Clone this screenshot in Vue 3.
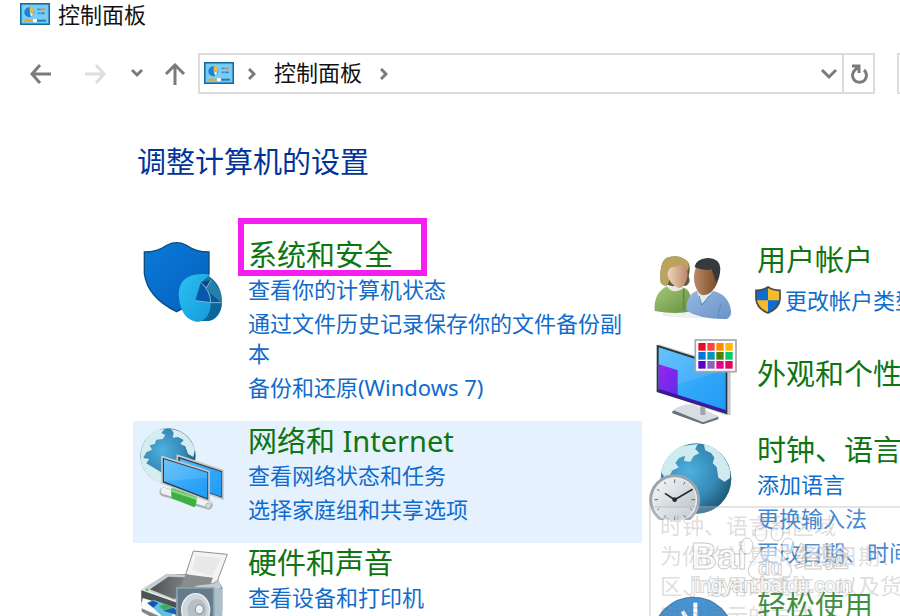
<template>
  <div class="window">
    <svg class="defs" aria-hidden="true">
      <defs>
        <linearGradient id="shieldBlue" x1="0" y1="0" x2="1" y2="1">
          <stop offset="0" stop-color="#0a7ad8" />
          <stop offset="1" stop-color="#0560bd" />
        </linearGradient>
        <linearGradient id="pieCyan" x1="0" y1="0" x2="1" y2="1">
          <stop offset="0" stop-color="#2cc0f2" />
          <stop offset="1" stop-color="#159bd8" />
        </linearGradient>
        <radialGradient id="globe" cx="0.4" cy="0.4" r="0.65">
          <stop offset="0" stop-color="#4fb0e0" />
          <stop offset="0.6" stop-color="#3589b5" />
          <stop offset="1" stop-color="#1d5876" />
        </radialGradient>
        <linearGradient id="screen" x1="0" y1="0" x2="1" y2="1">
          <stop offset="0" stop-color="#55bbfb" />
          <stop offset="0.5" stop-color="#35a9fa" />
          <stop offset="1" stop-color="#1e9af5" />
        </linearGradient>
        <linearGradient id="purple" x1="0" y1="0" x2="1" y2="1">
          <stop offset="0" stop-color="#9a22f5" />
          <stop offset="1" stop-color="#5d2fe0" />
        </linearGradient>
        <linearGradient id="steel" x1="0" y1="0" x2="1" y2="1">
          <stop offset="0" stop-color="#f7f9fa" />
          <stop offset="1" stop-color="#b4bec5" />
        </linearGradient>
        <linearGradient id="printerTop" x1="0" y1="0" x2="1" y2="0">
          <stop offset="0" stop-color="#4e5152" />
          <stop offset="1" stop-color="#a4a7a8" />
        </linearGradient>
        <linearGradient id="womanTop" x1="0" y1="0" x2="1" y2="1">
          <stop offset="0" stop-color="#a3c977" />
          <stop offset="1" stop-color="#688f42" />
        </linearGradient>
        <linearGradient id="manTop" x1="0" y1="0" x2="1" y2="1">
          <stop offset="0" stop-color="#96b9e2" />
          <stop offset="1" stop-color="#6a92c4" />
        </linearGradient>
        <linearGradient id="womanFace" x1="0" y1="0" x2="1" y2="0">
          <stop offset="0" stop-color="#efd5bd" />
          <stop offset="1" stop-color="#b98768" />
        </linearGradient>
        <linearGradient id="manFace" x1="0" y1="0" x2="1" y2="0">
          <stop offset="0" stop-color="#bb8a68" />
          <stop offset="1" stop-color="#78481f" />
        </linearGradient>
        <symbol id="panel" viewBox="0 0 90 66">
          <rect x="2" y="2" width="86" height="62" fill="#66c1ef" stroke="#176c9c" stroke-width="5" />
          <rect x="7" y="7" width="76" height="52" fill="#7acdf6" />
          <circle cx="28" cy="28" r="15" fill="#1684d2" />
          <path d="M29 26V11a15 15 0 0 1 12 21z" fill="#f5b92f" />
          <path d="M29 27 41 33a15 15 0 0 1-8 8z" fill="#d8effa" />
          <path d="M52 19h10M52 31h10" stroke="#3b98d5" stroke-width="5" />
          <path d="M64 19h10" stroke="#e98a2c" stroke-width="6" />
          <path d="M64 31h10" stroke="#2780c3" stroke-width="5" />
          <path d="M12 53h27" stroke="#e8a42a" stroke-width="6" />
          <path d="M39 53h12" stroke="#fff" stroke-width="9" />
          <path d="M51 53h27" stroke="#1b7dc5" stroke-width="6" />
        </symbol>
      </defs>
    </svg>

    <header class="titlebar">
      <svg class="panel-icon" aria-hidden="true"><use href="#panel" /></svg>
      <span class="title">控制面板</span>
    </header>

    <nav class="toolbar">
      <button class="nav back" aria-label="后退">
        <svg width="22" height="22" viewBox="0 0 22 22"><path d="M21 11H2M10 2l-8 9 8 9" /></svg>
      </button>
      <button class="nav forward" aria-label="前进" disabled>
        <svg width="22" height="22" viewBox="0 0 22 22"><path d="M1 11h19M12 2l8 9-8 9" /></svg>
      </button>
      <button class="nav recent" aria-label="最近位置">
        <svg width="12" height="22" viewBox="0 0 12 22"><path d="M1 7l5 5 5-5" /></svg>
      </button>
      <button class="nav up" aria-label="上移">
        <svg width="22" height="22" viewBox="0 0 22 22"><path d="M11 22V2M2 11l9-9 9 9" /></svg>
      </button>

      <div class="address">
        <svg class="panel-icon" aria-hidden="true"><use href="#panel" /></svg>
        <svg class="crumb-arrow" width="8" height="12" viewBox="0 0 8 12"><path d="M1 1l5 5-5 5" /></svg>
        <a href="#" class="crumb">控制面板</a>
        <svg class="crumb-arrow" width="8" height="12" viewBox="0 0 8 12"><path d="M1 1l5 5-5 5" /></svg>
        <button class="drop" aria-label="展开地址">
          <svg width="18" height="12" viewBox="0 0 18 12"><path d="M2 2l7 7 7-7" /></svg>
        </button>
        <button class="refresh" aria-label="刷新">
          <svg width="20" height="22" viewBox="0 0 20 22"><path d="M15 7a7 7 0 1 1-9 0M3 3h7v7M9 4l-4 4" /></svg>
        </button>
      </div>
      <input class="search" type="text" aria-label="搜索控制面板" />
    </nav>

    <main>
      <h1>调整计算机的设置</h1>
      <div class="columns">
        <div v-for="(column, c) in columns" :key="c" class="column">
          <section
            v-for="item in column"
            :key="item.icon"
            class="category"
            :class="[item.icon, { hovered: item.hovered }]"
          >
            <svg v-if="item.icon === 'security'" class="icon" viewBox="24 15 300 270">
              <path d="M43 66Q82 66 112 45Q140 31 168 45Q198 66 237 66V130Q228 202 140 245Q52 202 43 130Z" fill="url(#shieldBlue)" stroke="#094c80" stroke-width="4" />
              <ellipse cx="225" cy="204" rx="50" ry="70" fill="#18749f" transform="rotate(-12 225 204)" />
              <path d="M240 218h35q0 38-38 54l-38 2z" fill="#0a6797" />
              <path d="M207 133q-60 4-61 60q4 76 56 83q40-8 40-58l-45-8l15-52l28-24q-12-3-33-1z" fill="url(#pieCyan)" />
              <path d="M213 157l30-7l-12 22z" fill="#08488c" />
              <path d="M213 158l-17 54l45 6q0-36-28-60z" fill="#0757ab" />
              <path d="M243 150l-12 22q14 24 12 45h31q-1-42-31-67z" fill="#287fa9" />
              <path d="M241 190l31 26h-31z" fill="#0b56a0" />
              <path d="M213 158q29 26 29 60M196 212l46 6h33M243 150l-14 24" fill="none" stroke="#74b9d9" stroke-width="3" />
            </svg>

            <svg v-else-if="item.icon === 'network'" class="icon" viewBox="24 3 300 270">
              <circle cx="114" cy="108" r="83" fill="url(#globe)" />
              <path d="M34 90q8-40 48-60l22-3l-10 12l12 6l-8 12l-19 2l-5 13l-15 4l7 13l-17 8l-9 17l18 3l-9 13l17 10l35 21l8 15l-8 16q-46-12-64-52q-9-26-3-53z" fill="#d6edf0" />
              <path d="M123 27q53 8 72 61l-5 23l-16-10l-8-22l-15-7l10-12l-17-9l-16 2l3-15z" fill="#d6edf0" />
              <path d="M142 106l137 45v86l-136-48z" fill="#3e454a" stroke="#c1cbd0" stroke-width="5" />
              <path d="M150 116l124 40v74l-124-45z" fill="url(#screen)" />
              <path d="M102 216l133 39" stroke="#a8b1b5" stroke-width="27" stroke-linecap="round" />
              <path d="M102 213l133 39" stroke="#eef2f3" stroke-width="19" stroke-linecap="round" />
              <path d="M125 204q-3 14 0 31l68 27q9-8 6-33z" fill="#3fae45" />
              <path d="M125 207l74 25v8l-74-25z" fill="#7bde78" />
              <path d="M96 110l141 44v89l-141-54z" fill="#343c42" stroke="#bfc9cf" stroke-width="5" />
              <path d="M102 118l130 40v77l-130-51z" fill="url(#screen)" />
              <path d="M102 118l130 40v15l-130 11z" fill="#fff" opacity="0.12" />
              <circle cx="235" cy="257" r="8" fill="#d4dadd" stroke="#9da7ac" stroke-width="2" />
            </svg>

            <svg v-else-if="item.icon === 'hardware'" class="icon" viewBox="24 9 300 270">
              <path d="M35 150l75-48h143l24 40v70l-120 70l-122-67z" fill="#818686" />
              <path d="M36 148l75-47l151 8l13 34l-130 42z" fill="#c4ced2" />
              <path d="M60 148l55-38l137 5l-102 45l-16 18z" fill="url(#printerTop)" />
              <path d="M167 103l23-70l102 10l-30 80l-14 8z" fill="#f3f3f3" stroke="#8d9396" stroke-width="3" />
              <path d="M186 91l13-44l75 8l-28 52z" fill="#e6e8e9" />
              <path d="M167 103l82 10l-8 20l-90 8z" fill="#8a8d8f" />
              <path d="M34 151l106 36v42l-106-44z" fill="#4c5355" />
              <path d="M34 148l106 37" stroke="#e8eceb" stroke-width="5" />
              <circle cx="51" cy="150" r="4" fill="#61b845" />
              <path d="M38 174l99 30v25H89l-56-25z" fill="#fafbfb" />
              <path d="M52 187l20-7l66 24l-13 24H95z" fill="#60c1df" />
              <path d="M52 190l17-8l16 7l-15 14z" fill="#1754ad" />
              <path d="M88 199l19-8l22 12l-29 6z" fill="#41ad54" />
              <path d="M99 212l31-9l8 6v15z" fill="#1760ad" />
              <path d="M247 144l30 2v120h-30z" fill="#abc0cd" />
              <path d="M141 143l110 1v126H141z" fill="#647b8b" stroke="#8da0ac" stroke-width="5" />
              <ellipse cx="197" cy="210" rx="42" ry="49" fill="#cfd6d9" stroke="#eef1f2" stroke-width="4" />
              <ellipse cx="201" cy="210" rx="28" ry="33" fill="#b6bfc4" />
              <ellipse cx="208" cy="208" rx="12" ry="14" fill="#edf0f1" stroke="#7f8d95" stroke-width="3" />
            </svg>

            <svg v-else-if="item.icon === 'users'" class="icon" viewBox="21 0 300 270">
              <ellipse cx="171" cy="223" rx="106" ry="11" fill="#eef0f1" />
              <path d="M62 128q-5-65 22-76q38-9 60 14q9 14 2 43q8 18-7 28l-43 2z" fill="#64583f" />
              <path d="M62 126q-5-65 22-74q38-11 60 14q5 16-1 25l-44 4l-18 43q-16 0-19-12z" fill="#baa45c" />
              <path d="M83 140h50l9 47H92z" fill="#f0e6dc" />
              <path d="M82 103q6-27 22-22l30-9q11 13 8 39q-8 32-24 34q-29-9-36-42z" fill="url(#womanFace)" />
              <path d="M44 213q-4-54 37-74q15 27 51 5q26 7 24 70q-51 10-112-1z" fill="url(#womanTop)" />
              <path d="M131 145v65" stroke="#63883f" stroke-width="5" />
              <path d="M168 159q18-20 49-4l-6 31l-38 26z" fill="#dcecf6" />
              <path d="M163 98q8-38 38-36q32 2 36 34q0 36-21 58q-28 24-44-2q-14-26-9-54z" fill="url(#manFace)" />
              <path d="M164 82q4-27 43-28q32 2 34 31q-1 31-12 42l-7-18l-7-21q-21 6-51-6z" fill="#353a3d" />
              <path d="M139 212q-1-48 32-60q4 22 14 42l34-41q47 10 54 59q1 18-13 25q-76 2-121-25z" fill="url(#manTop)" />
              <path d="M177 167l8 28l24-28" fill="none" stroke="#527fae" stroke-width="3" />
              <path d="M243 191q-8 20-8 45" fill="none" stroke="#648abb" stroke-width="3" />
            </svg>

            <svg v-else-if="item.icon === 'appearance'" class="icon" viewBox="21 18 300 270">
              <path d="M97 244q27-22 65-18l73 34v8l-46 15l-92-33z" fill="#68727a" />
              <path d="M99 240q27-20 63-17l73 37l-46 17z" fill="#d7dee3" />
              <path d="M181 218h15v37h-15z" fill="#9da7ad" />
              <path d="M56 43l216 67v145l-13 1l-209-72z" fill="#c3c9cc" />
              <path d="M50 44l212 67v142L50 186z" fill="#2a343f" />
              <path d="M56 52l201 64v130L56 181z" fill="url(#screen)" />
              <path d="M56 52l201 64v3L56 181z" fill="#fff" opacity="0.1" />
              <path d="M56 103l57 18v76l-57-19z" fill="url(#purple)" />
              <path d="M56 176l201 64v9L56 185z" fill="#4014a8" />
              <rect x="166" y="30" width="122" height="95" fill="#fff" stroke="#a6a6a6" stroke-width="5" />
              <rect
                v-for="(color, i) in swatches"
                :key="color"
                :x="175 + (i % 4) * 27"
                :y="39 + Math.floor(i / 4) * 27"
                width="22"
                height="23"
                :fill="color"
              />
            </svg>

            <svg v-else-if="item.icon === 'clock'" class="icon" viewBox="21 0 300 270">
              <circle cx="168" cy="146" r="106" fill="url(#globe)" />
              <path d="M64 127q12-60 65-79l44-6l-7 15l12 13l-17 8l-10 17l-19-2l3-16l-18 7l-11 15l10 13l-20 10l-6 15l-16 5z" fill="#cfebef" />
              <path d="M191 43q59 13 80 81l-1 20l-16 11l-19-12l-5-32l-12-11l5-17l-9-13l-18-9z" fill="#cfebef" />
              <circle cx="104" cy="209" r="72" fill="#e4e7e8" stroke="#98a5ad" stroke-width="9" />
              <circle cx="104" cy="209" r="65" fill="url(#steel)" stroke="#eef1f2" stroke-width="3" />
              <path
                d="M104 148v11M104 259v11M43 209h11M154 209h11M73 156l4 7M135 156l-4 7M51 178l7 4M51 240l7-4M157 240l-7-4M73 262l4-7M135 262l-4-7"
                stroke="#62696d"
                stroke-width="3"
              />
              <path d="M75 190l29 19l54-31" fill="none" stroke="#252a2d" stroke-width="5" />
              <circle cx="104" cy="209" r="7" fill="#252a2d" />
            </svg>

            <svg v-else class="icon" viewBox="21 246 300 270">
              <circle cx="160" cy="400" r="120" fill="#1979c7" stroke="#146198" stroke-width="4" />
              <path d="M166 296v44M128 322l12 22" stroke="#fff" stroke-width="12" />
            </svg>

            <div class="body">
              <h2><a href="#">{{ item.title }}</a></h2>
              <ul v-if="item.links.length">
                <li v-for="link in item.links" :key="link">
                  <svg v-if="item.shield" class="uac" viewBox="0 0 78 84" aria-hidden="true">
                    <path d="M3 13Q24 13 39 3Q54 13 75 13V40Q72 67 39 81Q6 67 3 40Z" fill="#f9b928" />
                    <path d="M39 3V43H3V13Q24 13 39 3zM39 43H75Q70 68 39 81z" fill="#0b6ed0" />
                    <path d="M3 13Q24 13 39 3Q54 13 75 13V40Q72 67 39 81Q6 67 3 40Z" fill="none" stroke="#45494c" stroke-width="5" />
                  </svg>
                  <a href="#">{{ link }}</a>
                </li>
              </ul>
            </div>
            <span v-if="item.marked" class="marker"></span>
          </section>
        </div>
      </div>
    </main>

    <div class="tooltip" role="tooltip">
      <p v-for="line in tooltip" :key="line">{{ line }}</p>
    </div>

    <svg class="watermark" width="170" height="84" viewBox="0 0 170 84">
      <text x="2" y="48" class="wm-latin">Bai</text>
      <path d="M81 26c9 0 12 8 17 14c8 8 4 18-5 18c-8 0-16 0-24 0c-10 0-13-10-5-18c5-6 8-14 17-14z" />
      <ellipse cx="58" cy="25" rx="6" ry="8" />
      <ellipse cx="72" cy="12" rx="6" ry="8" />
      <ellipse cx="88" cy="12" rx="6" ry="8" />
      <ellipse cx="99" cy="25" rx="6" ry="8" />
      <text x="69" y="54" class="wm-du">du</text>
      <text x="106" y="46" class="wm-cjk">经验</text>
      <text x="2" y="71" class="wm-url">jingyan.baidu.com</text>
    </svg>
  </div>
</template>

<script setup>
const columns = [
  [
    {
      icon: "security",
      title: "系统和安全",
      links: ["查看你的计算机状态", "通过文件历史记录保存你的文件备份副本", "备份和还原(Windows 7)"],
      marked: true,
    },
    {
      icon: "network",
      title: "网络和 Internet",
      links: ["查看网络状态和任务", "选择家庭组和共享选项"],
      hovered: true,
    },
    { icon: "hardware", title: "硬件和声音", links: ["查看设备和打印机"] },
  ],
  [
    { icon: "users", title: "用户帐户", links: ["更改帐户类型"], shield: true },
    { icon: "appearance", title: "外观和个性化", links: [] },
    {
      icon: "clock",
      title: "时钟、语言和区域",
      links: ["添加语言", "更换输入法", "更改日期、时间或数字格式"],
    },
    { icon: "ease", title: "轻松使用", links: [] },
  ],
]

const swatches = [
  "#e81123", "#ff4343", "#ff8c00", "#ffb900",
  "#0078d7", "#0099bc", "#498205", "#00cc6a",
  "#5a00c8", "#8764b8", "#e3008c", "#ea005e",
]

const tooltip = [
  "时钟、语言和区域",
  "为你的计算机更改日期、时间、时",
  "区、使用的语言，以及货币、日期、",
  "时间显示的方式。",
]
</script>

<style>
body {
  margin: 0;
  background: #fff;
}
</style>

<style scoped>
.window {
  position: relative;
  height: 100vh;
  overflow: hidden;
  background: #fff;
  color: #111;
  font-family: "Noto Sans", "Noto Sans CJK SC", sans-serif;
  font-size: 22px;
}

.defs {
  position: absolute;
  width: 0;
  height: 0;
}

a {
  color: inherit;
  text-decoration: none;
}

button {
  padding: 0;
  border: none;
  background: none;
  display: flex;
  align-items: center;
  justify-content: center;
}

.panel-icon {
  width: 30px;
  height: 22px;
  flex: none;
}

.titlebar {
  display: flex;
  align-items: center;
  gap: 8px;
  height: 28px;
  padding-left: 20px;
}

.title,
.crumb {
  line-height: 24px;
}

.crumb {
  margin-left: 18px;
  padding-bottom: 4px;
}

.toolbar {
  display: flex;
  align-items: center;
  height: 41px;
  margin: 25px -297px 0 30px;
}

.toolbar svg path {
  fill: none;
  stroke: #7b7b7b;
  stroke-width: 3;
}

.toolbar .forward svg path {
  stroke: #dedede;
}

.forward {
  margin-left: 32px;
}

.recent {
  margin-left: 25px;
}

.up {
  margin-left: 21px;
}

.address {
  display: flex;
  align-items: center;
  flex: 1;
  box-sizing: border-box;
  height: 41px;
  margin-left: 12px;
  padding-left: 4px;
  border: 2px solid #dcdcdc;
}

.address .panel-icon {
  margin-top: -2px;
}

.crumb-arrow {
  margin-left: 14px;
}

.crumb + .crumb-arrow {
  margin-left: 18px;
}

.drop {
  margin-left: auto;
  padding-right: 4px;
}

.refresh {
  align-self: stretch;
  width: 31px;
  border-left: 2px solid #dcdcdc;
}

.search {
  box-sizing: border-box;
  width: 300px;
  height: 41px;
  margin-left: 22px;
  border: 2px solid #dcdcdc;
  flex: none;
}

main {
  padding-left: 133px;
}

h1 {
  margin: 49px 0 54px 4px;
  color: #003399;
  font-size: 29px;
  font-weight: 400;
  line-height: 38px;
}

.columns {
  display: grid;
  grid-template-columns: minmax(0, 1fr) 258px;
}

.column + .column {
  padding-top: 5px;
  white-space: nowrap;
}

.category {
  position: relative;
  display: flex;
  align-items: flex-start;
  padding: 1px 0 15px 5px;
}

.hovered {
  background: #e5f1fd;
}

.icon {
  width: 100px;
  height: 90px;
  margin: -1px 10px -15px 0;
  flex: none;
}

.body {
  flex: 1;
  min-width: 0;
}

h2 {
  margin: 0;
  color: #0f7512;
  font-size: 29px;
  font-weight: 400;
  line-height: 38px;
}

ul {
  margin: 0;
  padding: 0;
  list-style: none;
  color: #0f6ccd;
}

li {
  padding: 0 0 4px;
  line-height: 30px;
}

.users li {
  display: flex;
  align-items: center;
  gap: 4px;
  height: 38px;
  padding: 2px 0;
}

.uac {
  width: 26px;
  height: 28px;
  margin-left: -2px;
  flex: none;
}

.appearance {
  box-sizing: border-box;
  height: 94px;
}

.appearance .body {
  padding-top: 18px;
}

.marker {
  position: absolute;
  top: -17px;
  left: 105px;
  box-sizing: border-box;
  width: 189px;
  height: 58px;
  border: 6px solid #f51df0;
}

.tooltip {
  position: absolute;
  top: 506px;
  left: 649px;
  padding: 2px 9px;
  border: 2px solid rgba(150, 150, 150, 0.25);
  background: rgba(255, 255, 255, 0.2);
  color: rgba(120, 105, 105, 0.24);
  line-height: 30px;
  white-space: nowrap;
}

.tooltip p {
  margin: 0;
}

.watermark {
  position: absolute;
  top: 521px;
  right: 41px;
  fill: rgba(255, 255, 255, 0.6);
  stroke: rgba(150, 150, 150, 0.5);
  stroke-width: 1;
}

.wm-latin {
  font: bold 36px "Liberation Sans", sans-serif;
}

.wm-du {
  font: bold 20px "Liberation Sans", sans-serif;
}

.wm-cjk {
  font: bold 27px "Noto Sans CJK SC", sans-serif;
}

.wm-url {
  font: 20px "Liberation Sans", sans-serif;
  fill: rgba(255, 255, 255, 0.9);
  stroke: rgba(150, 150, 150, 0.4);
  stroke-width: 2;
  paint-order: stroke;
}
</style>
